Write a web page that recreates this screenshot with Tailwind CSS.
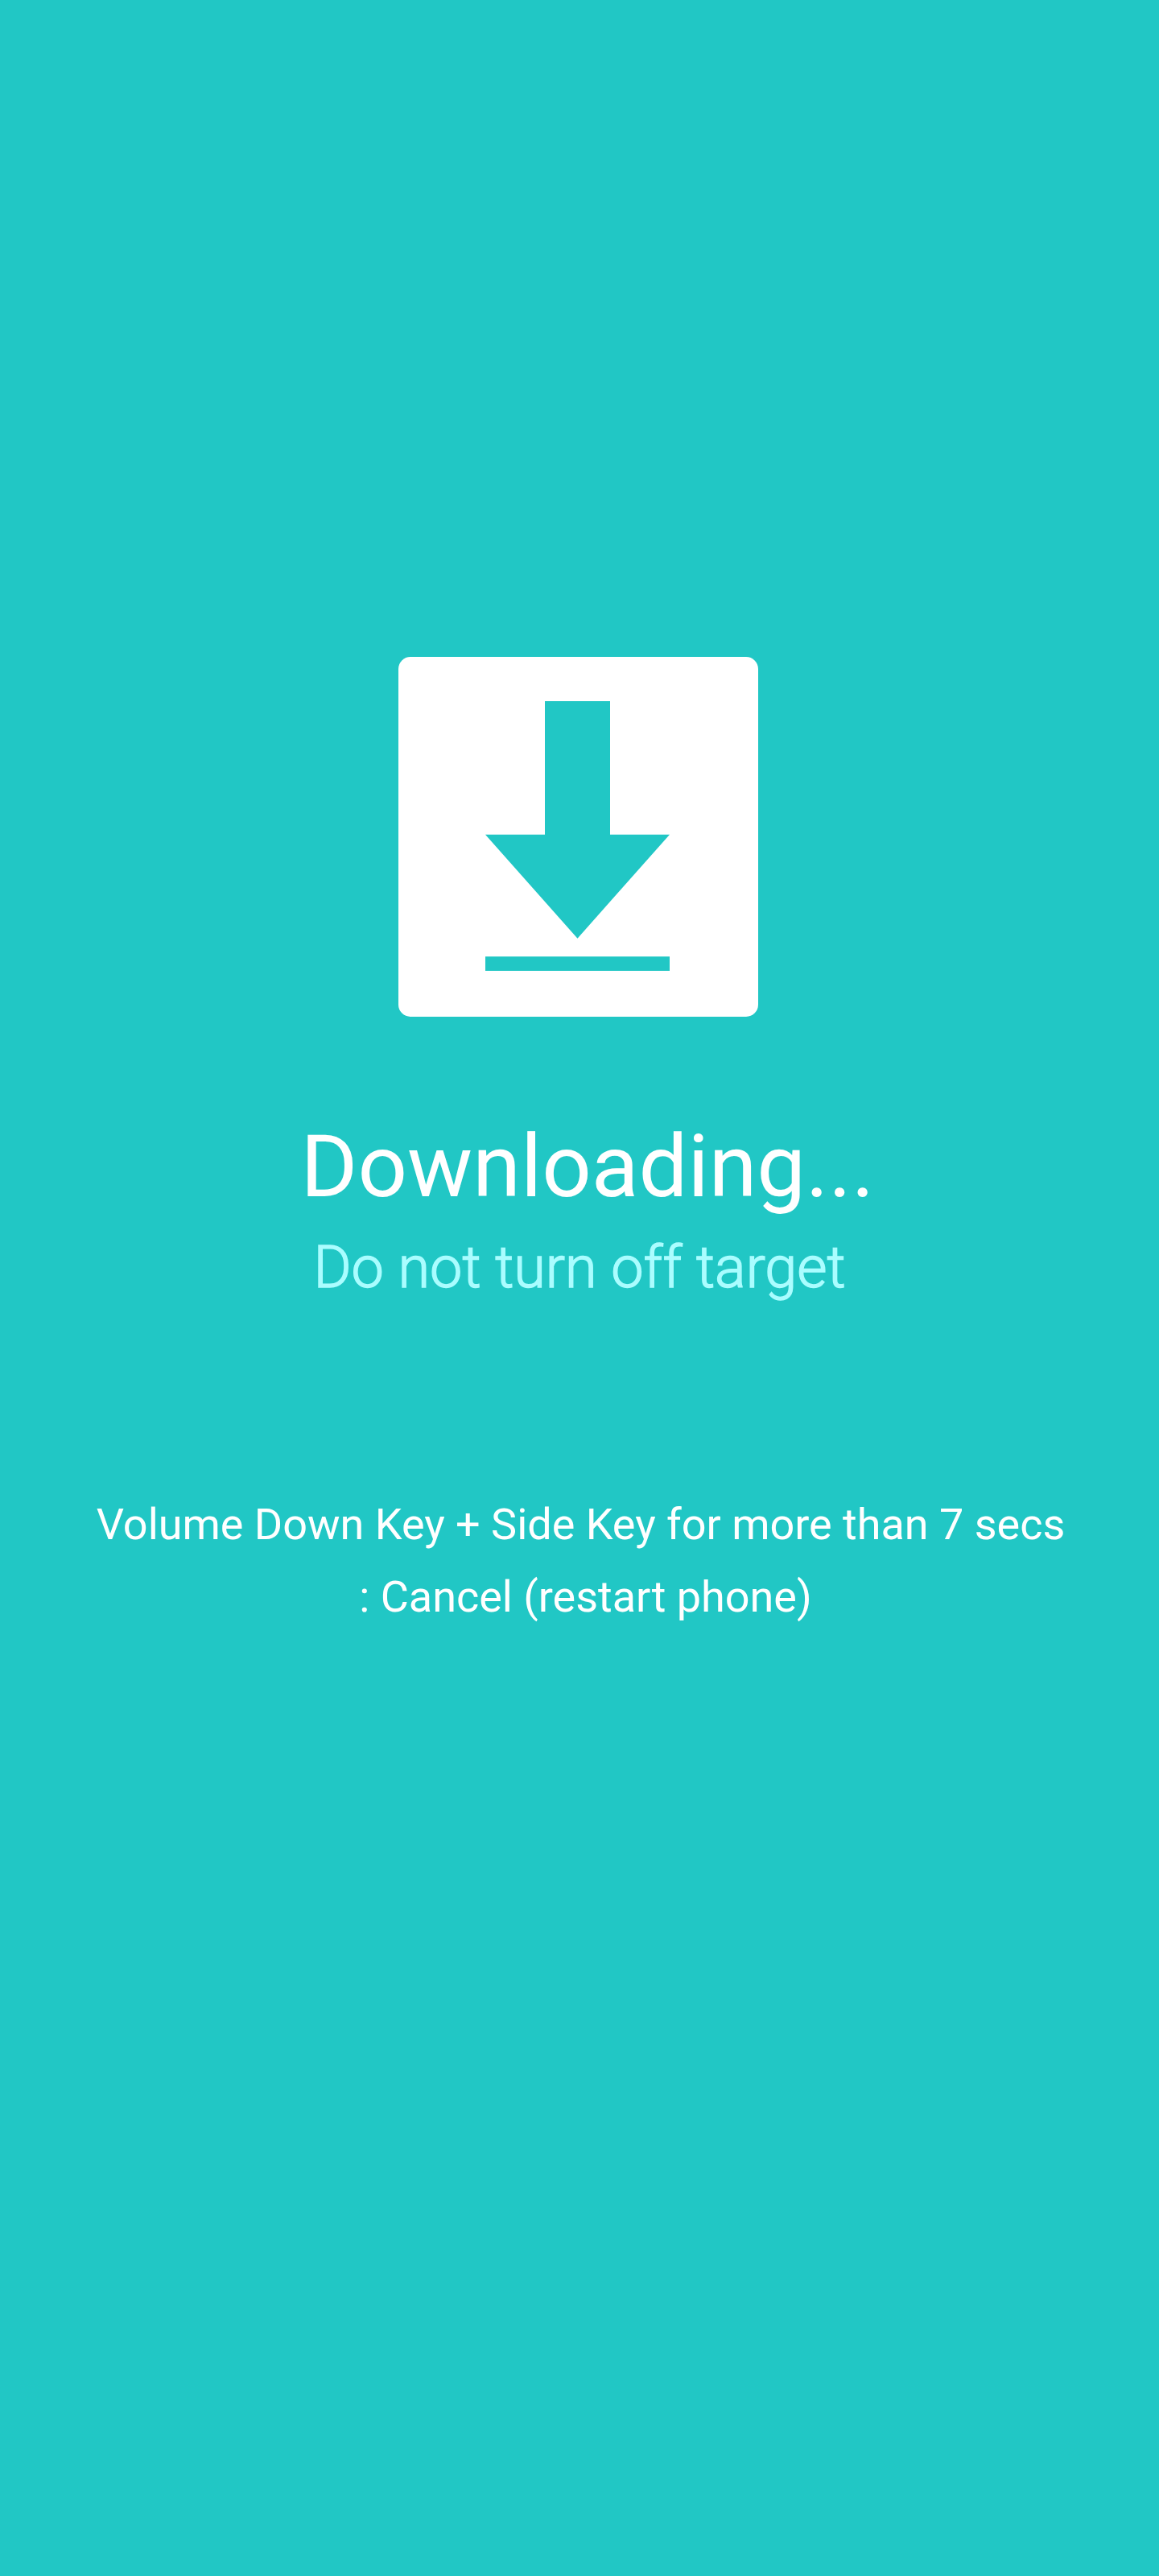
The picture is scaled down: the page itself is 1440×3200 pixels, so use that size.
<!DOCTYPE html>
<html lang="en"><head><meta charset="utf-8"><title>Downloading</title><script src="https://cdn.jsdelivr.net/npm/@tailwindcss/browser@4"></script></head>
<body class="bg-[#21c7c5]">
<main class="flex h-[3200px] w-[1440px] flex-col items-center bg-[#21c7c5] pt-[816px] font-['Roboto',sans-serif] text-white">
<svg class="-ml-[3px] h-[447px] w-[447px] shrink-0" viewBox="0 0 447 447"><rect width="447" height="447" rx="15" fill="#fff"/><path d="M182 55h81v165.7h74L222.5 349.7 108 220.7h74zM108 372.2h229V390H108z" fill="#21c7c5"/></svg>
<h1 class="mt-[122px] ml-5 whitespace-nowrap text-[108px] leading-[128px]">Downloading...</h1>
<p class="mt-5 whitespace-nowrap text-[72px] leading-[84px] font-light text-[#aafdff] [-webkit-text-stroke:1.4px_#aafdff]">Do not turn off target</p>
<p class="mt-[232px] ml-[3px] whitespace-nowrap text-center text-[54px] leading-[90px] tracking-[-0.02px]">Volume Down Key + Side Key for more than 7 secs<br><span class="ml-3">: Cancel (restart phone)</span></p>
</main></body></html>
